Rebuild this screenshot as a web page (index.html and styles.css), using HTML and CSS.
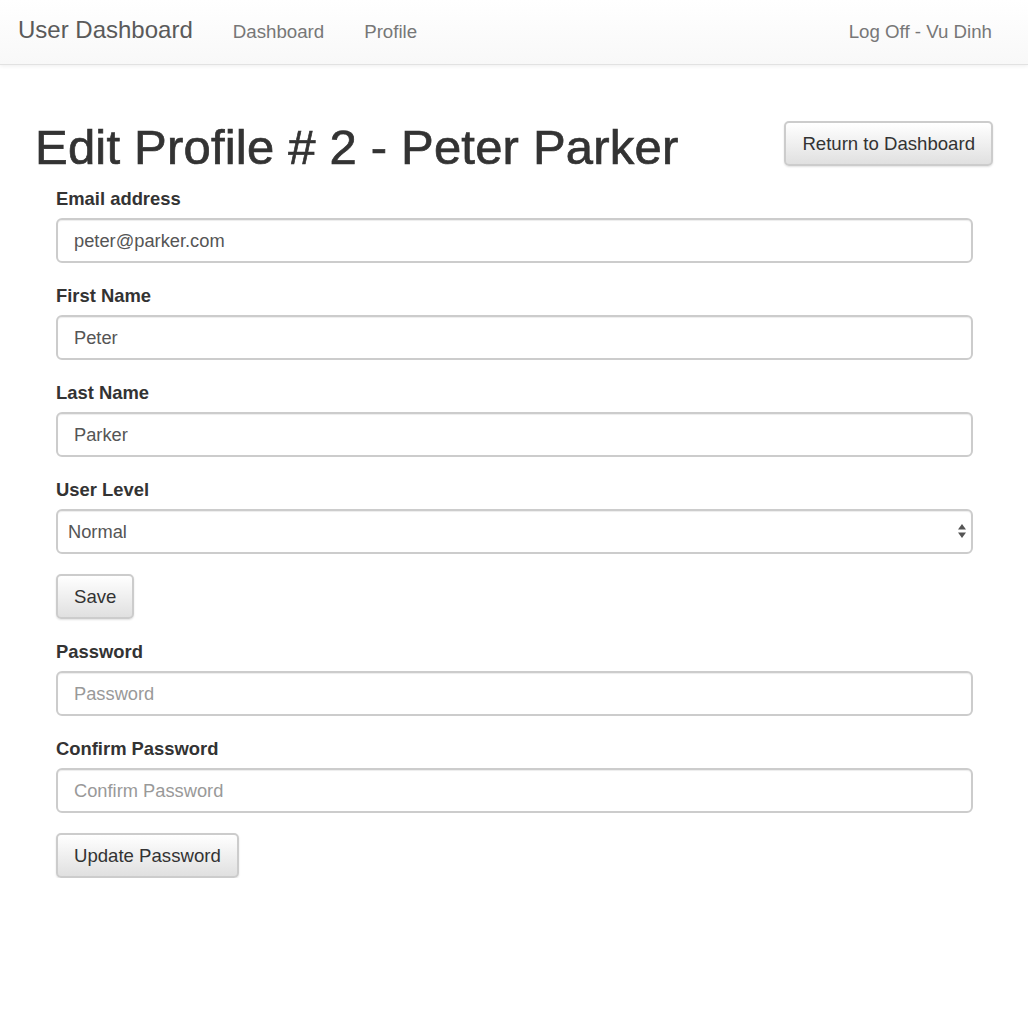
FILE: index.html
```html
<!DOCTYPE html>
<html>
<head>
<meta charset="utf-8">
<title>Edit Profile</title>
<link rel="stylesheet" href="styles.css">
</head>
<body>
<nav class="navbar">
  <a class="brand" href="#">User Dashboard</a>
  <ul class="nav">
    <li><a href="#">Dashboard</a></li>
    <li><a href="#">Profile</a></li>
  </ul>
  <ul class="nav nav-right">
    <li><a href="#">Log Off - Vu Dinh</a></li>
  </ul>
</nav>
<main class="page">
  <div class="header-row">
    <h1 class="title">Edit Profile # 2 - Peter Parker</h1>
    <a class="btn" href="#">Return to Dashboard</a>
  </div>
  <form class="form">
    <div class="group">
      <label class="label">Email address</label>
      <input class="control" type="text" value="peter@parker.com">
    </div>
    <div class="group">
      <label class="label">First Name</label>
      <input class="control" type="text" value="Peter">
    </div>
    <div class="group">
      <label class="label">Last Name</label>
      <input class="control" type="text" value="Parker">
    </div>
    <div class="group">
      <label class="label">User Level</label>
      <div class="select-wrap">
        <select class="control select">
          <option>Normal</option>
          <option>Admin</option>
        </select>
        <svg class="select-arrows" width="10" height="16" viewBox="0 0 10 16"><path d="M5 1 L9 6.5 H1 Z" fill="#555"/><path d="M5 15 L9 9.5 H1 Z" fill="#555"/></svg>
      </div>
    </div>
    <button class="btn btn-block-gap" type="button">Save</button>
    <div class="group">
      <label class="label">Password</label>
      <input class="control" type="password" placeholder="Password">
    </div>
    <div class="group">
      <label class="label">Confirm Password</label>
      <input class="control" type="password" placeholder="Confirm Password">
    </div>
    <button class="btn" type="button">Update Password</button>
  </form>
</main>
</body>
</html>
```

FILE: styles.css
```css
* { box-sizing: border-box; }
html, body { margin: 0; padding: 0; background: #fff; }
body {
  font-family: "Liberation Sans", Arial, Helvetica, sans-serif;
  font-size: 18px;
  color: #333;
}
.navbar {
  height: 65px;
  display: flex;
  align-items: center;
  background: linear-gradient(to bottom, #ffffff 0%, #f8f8f8 100%);
  border-bottom: 1px solid #e2e2e2;
  box-shadow: 0 1px 4px rgba(0,0,0,0.07);
  padding: 0 36px 0 18px;
}
.brand {
  font-size: 24px;
  color: #5a5a5a;
  text-decoration: none;
  margin-right: 40px;
  margin-top: -4px;
}
.nav {
  list-style: none;
  display: flex;
  gap: 40px;
  margin: 0;
  padding: 0;
}
.nav a {
  color: #777;
  text-decoration: none;
  font-size: 18.7px;
}
.nav-right { margin-left: auto; }
.page {
  padding: 0 35px 0 32px;
}
.header-row {
  display: flex;
  justify-content: space-between;
  align-items: flex-start;
  margin-top: 56px;
  margin-bottom: 12px;
}
.title {
  margin: 0;
  font-size: 49px;
  font-weight: normal;
  letter-spacing: 0.2px;
  -webkit-text-stroke: 0.7px #333;
  line-height: 53px;
  color: #333;
  padding-left: 3px;
}
.form {
  margin: 0 20px 0 24px;
}
.group { margin-bottom: 20px; }
.label {
  display: block;
  font-weight: bold;
  font-size: 18.4px;
  line-height: 26px;
  margin-bottom: 6px;
  color: #333;
}
.control {
  display: block;
  width: 100%;
  height: 45px;
  padding: 0 16px;
  font-family: inherit;
  font-size: 18.3px;
  color: #555;
  background: #fff;
  border: 2px solid #ccc;
  border-radius: 6px;
  box-shadow: inset 0 1px 1px rgba(0,0,0,0.075);
  outline: none;
}
.control::placeholder { color: #999; }
.select-wrap { position: relative; }
.select {
  appearance: none;
  -webkit-appearance: none;
  padding-left: 10px;
}
.select-arrows {
  position: absolute;
  right: 6px;
  top: 14px;
}
.btn {
  display: inline-block;
  height: 45px;
  line-height: 41px;
  padding: 0 16px;
  font-family: inherit;
  font-size: 18.6px;
  color: #333;
  text-decoration: none;
  background: linear-gradient(to bottom, #ffffff 0%, #e0e0e0 100%);
  border: 2px solid #ccc;
  border-radius: 5px;
  box-shadow: 0 1px 2px rgba(0,0,0,0.12);
  cursor: pointer;
}
.btn-block-gap { margin-bottom: 20px; }
```
